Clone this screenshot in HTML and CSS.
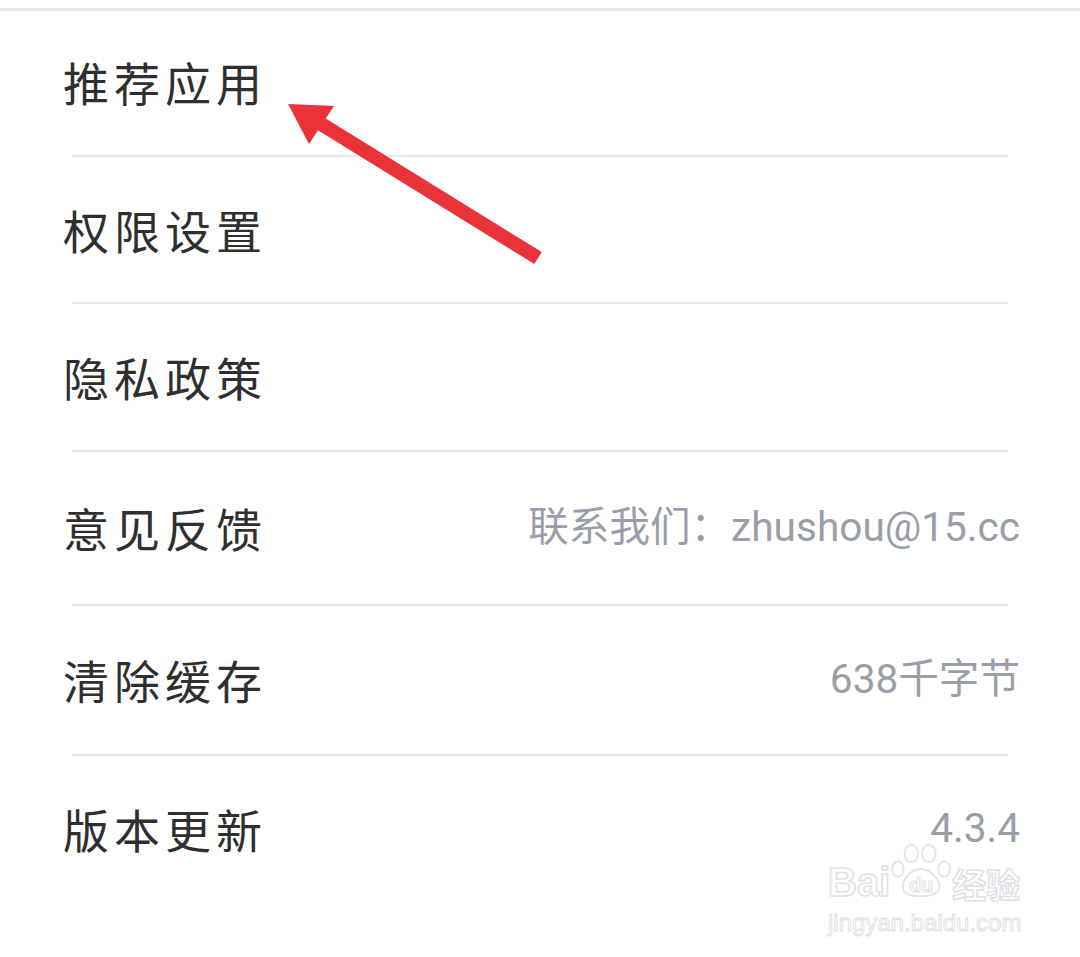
FILE: index.html
```html
<!DOCTYPE html>
<html lang="zh">
<head>
<meta charset="utf-8">
<link rel="stylesheet" href="styles.css">
</head>
<body>
<div class="page">
  <div class="topline"></div>
  <ul class="list">
    <li class="row r1"><span class="label">推荐应用</span></li>
    <li class="row r2"><span class="label">权限设置</span></li>
    <li class="row r3"><span class="label">隐私政策</span></li>
    <li class="row r4"><span class="label">意见反馈</span><span class="value">联系我们：zhushou@15.cc</span></li>
    <li class="row r5"><span class="label">清除缓存</span><span class="value">638千字节</span></li>
    <li class="row r6"><span class="label">版本更新</span><span class="value">4.3.4</span></li>
  </ul>
  <svg class="arrow" width="1080" height="300" viewBox="0 0 1080 300">
    <line x1="538" y1="258" x2="318" y2="122" stroke="#ea3338" stroke-width="14"/>
    <polygon points="288,104 334,106 309,144" fill="#ea3338"/>
  </svg>
  <div class="watermark">
    <div class="wm-top">
      <span class="wm-bai">Bai</span>
      <svg class="paw" width="62" height="58" viewBox="0 0 64 60">
        <g fill="none" stroke="#e2e4e8" stroke-width="2">
          <ellipse cx="22" cy="12" rx="7" ry="9"/>
          <ellipse cx="40" cy="12" rx="7" ry="9"/>
          <ellipse cx="8" cy="28" rx="6" ry="8"/>
          <ellipse cx="56" cy="28" rx="6" ry="8"/>
          <path d="M14 50 C10 40 22 28 32 28 C42 28 54 40 50 50 C46 58 18 58 14 50 Z"/>
        </g>
        <text x="32" y="52" text-anchor="middle" class="wm-du">du</text>
      </svg>
      <span class="wm-cn">经验</span>
    </div>
    <div class="wm-url">jingyan.baidu.com</div>
  </div>
</div>
</body>
</html>
```
FILE: styles.css
```css
* { box-sizing: border-box; }
html, body {
  margin: 0;
  padding: 0;
  background: #ffffff;
}
.page {
  position: relative;
  width: 1080px;
  height: 957px;
  overflow: hidden;
  background: #fff;
  font-family: "Noto Sans CJK SC", "Noto Sans", sans-serif;
}
.topline {
  margin-top: 8px;
  height: 3px;
  background: #e7e7e7;
}
.list {
  list-style: none;
  margin: 0;
  padding: 0;
}
.row {
  display: flex;
  align-items: center;
  justify-content: space-between;
  padding: 0 60px 4px 63px;
  position: relative;
}
.row::after {
  content: "";
  position: absolute;
  left: 72px;
  right: 72px;
  bottom: 0;
  height: 2px;
  background: #e6e8eb;
}
.r6::after { display: none; }
.r1 { height: 146px; padding-bottom: 6px; }
.r2 { height: 147px; }
.r3 { height: 148px; }
.r4 { height: 154px; }
.r5 { height: 150px; }
.r6 { height: 150px; padding-bottom: 6px; }
.label {
  font-size: 46px;
  letter-spacing: 5px;
  color: #2f2f2f;
  line-height: 1;
}
.value {
  font-family: Roboto, "Noto Sans CJK SC", sans-serif;
  font-size: 40.6px;
  color: #9a9ea8;
  line-height: 1;
}
.arrow {
  position: absolute;
  left: 0;
  top: 0;
}
.watermark {
  position: absolute;
  left: 828px;
  top: 838px;
  display: flex;
  flex-direction: column;
  align-items: flex-start;
}
.wm-top {
  display: flex;
  align-items: flex-end;
  height: 62px;
}
.wm-bai, .wm-cn {
  font-family: "Liberation Sans", sans-serif;
  font-size: 40px;
  font-weight: bold;
  color: transparent;
  -webkit-text-stroke: 1.5px #e0e2e6;
  line-height: 0.9;
}
.wm-cn {
  font-family: "Noto Sans CJK SC", sans-serif;
  font-size: 34px;
  margin-left: 0;
}
.wm-du {
  font-family: "Liberation Sans", sans-serif;
  font-size: 20px;
  font-weight: bold;
  fill: none;
  stroke: #e2e4e8;
  stroke-width: 1.2;
}
.wm-url {
  font-family: "Liberation Sans", sans-serif;
  font-size: 24px;
  color: transparent;
  -webkit-text-stroke: 1px #dfe1e5;
  line-height: 1;
  margin-top: 11px;
}
```
